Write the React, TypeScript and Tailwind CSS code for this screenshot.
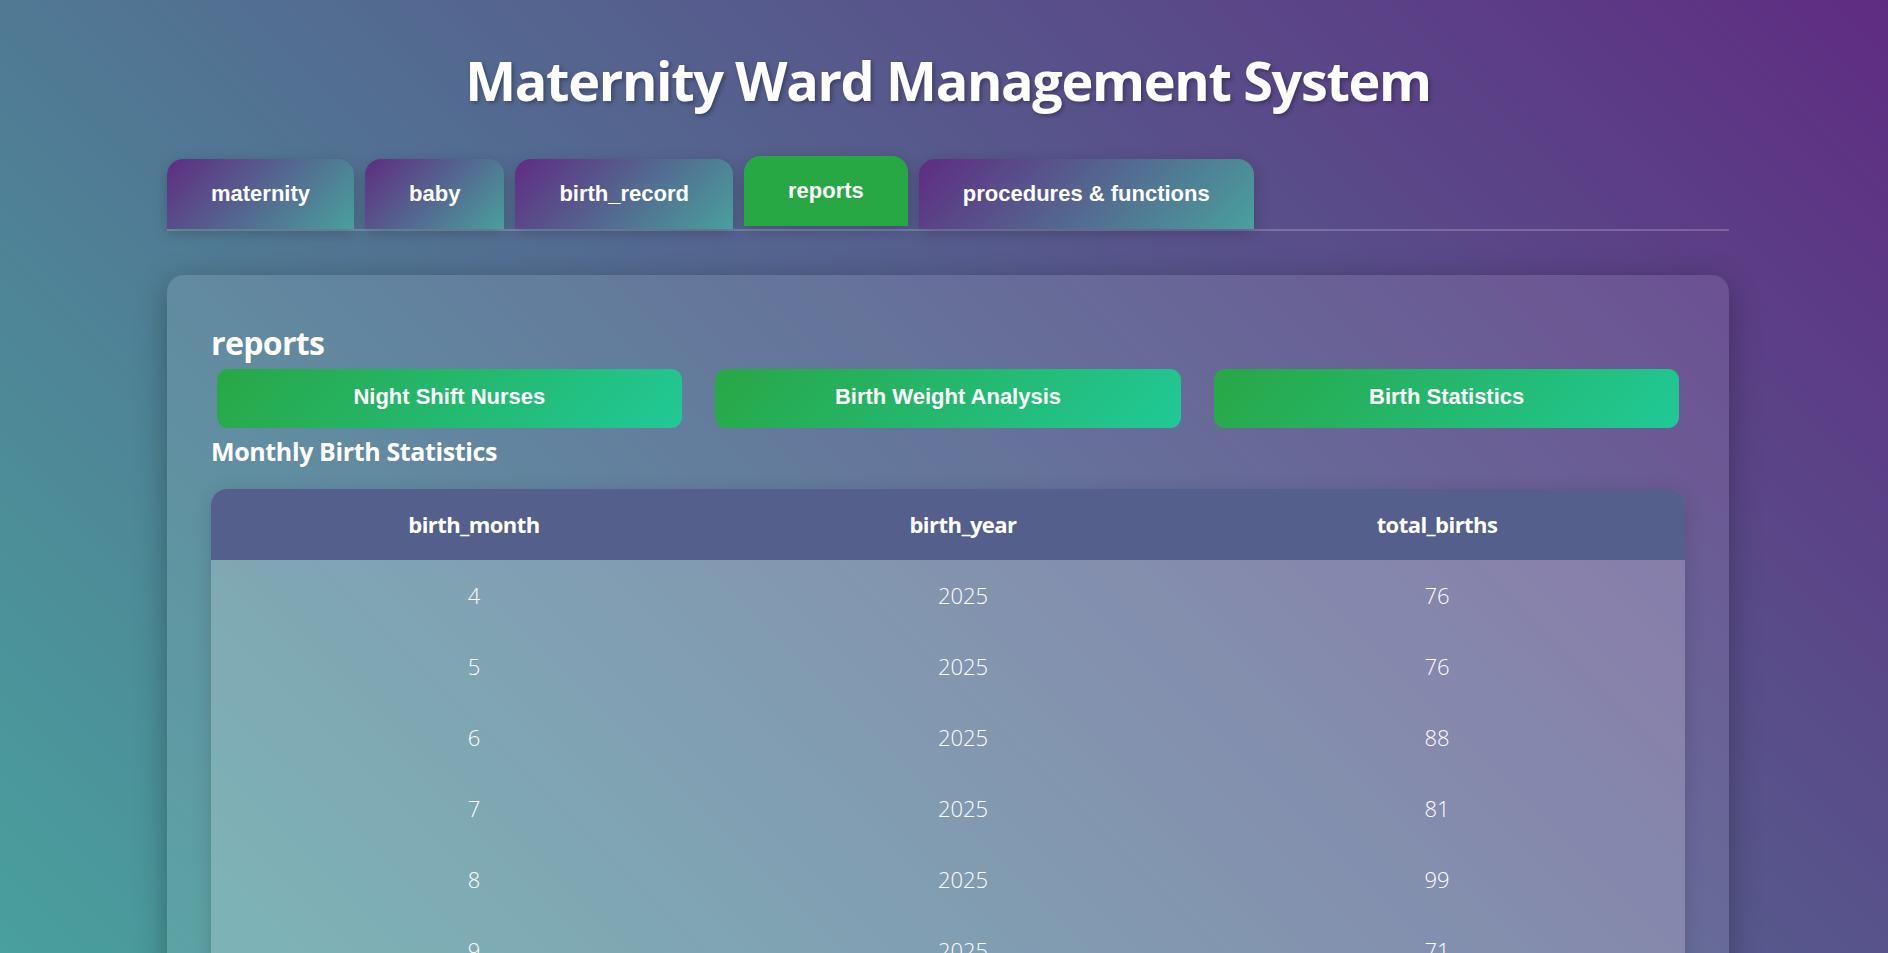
import React from "react";

const tabs = ["maternity", "baby", "birth_record", "reports", "procedures & functions"];
const reports = ["Night Shift Nurses", "Birth Weight Analysis", "Birth Statistics"];
const rows = [
  [4, 2025, 76],
  [5, 2025, 76],
  [6, 2025, 88],
  [7, 2025, 81],
  [8, 2025, 99],
  [9, 2025, 71],
];

const seg = { fontFamily: '"Open Sans", "Noto Sans", sans-serif' };
const arial = { fontFamily: '"Liberation Sans", Arial, sans-serif' };

export default function App() {
  return (
    <div className="min-h-screen bg-fixed bg-[linear-gradient(45deg,#49a09d,#5f2c82)] pl-[8px] text-white" style={seg}>
      <div className="mx-auto w-[1562px] pb-[40px]">
        <h1 className="pt-[46px] text-center text-[54px] font-bold leading-[68px] tracking-[-0.025em] [text-shadow:2px_2px_4px_rgba(0,0,0,0.3)]">
          Maternity Ward Management System
        </h1>

        <div className="mt-[45px] flex items-end gap-[11px] border-b-2 border-white/20">
          {tabs.map((t) => {
            const active = t === "reports";
            return (
              <div
                key={t}
                style={arial}
                className={
                  active
                    ? "flex h-[70px] -translate-y-[3px] items-center rounded-t-[16px] bg-[#28a745] px-[44px] pb-[2px] text-[22px] font-bold shadow-[0_4px_15px_rgba(0,0,0,0.2)]"
                    : "flex h-[70px] items-center rounded-t-[16px] bg-[linear-gradient(135deg,#5f2c82,#49a09d)] px-[44px] pb-[2px] text-[22px] font-bold shadow-[0_4px_15px_rgba(0,0,0,0.2)]"
                }
              >
                {t}
              </div>
            );
          })}
        </div>

        <div className="mt-[44px] rounded-[17px] bg-white/10 px-[44px] pt-[47px] pb-[44px] shadow-[0_8px_32px_rgba(0,0,0,0.3)]">
          <h2 className="mt-[2px] text-[32px] font-bold leading-[38px] tracking-[-0.02em]">reports</h2>
          <div className="mt-[1px] grid grid-cols-3 gap-[22px]">
            {reports.map((r) => (
              <button
                key={r}
                style={arial}
                className="m-[5.5px] h-[59px] rounded-[11px] bg-[linear-gradient(135deg,#28a745,#20c997)] pb-[4px] text-[22px] font-bold text-white"
              >
                {r}
              </button>
            ))}
          </div>
          <h3 className="mt-[3px] text-[25px] font-bold leading-[30px] tracking-[-0.015em]">Monthly Birth Statistics</h3>

          <div className="mt-[23px] overflow-hidden rounded-[16px] bg-white/20 shadow-[0_4px_20px_rgba(0,0,0,0.15)]">
            <table className="w-full table-fixed border-collapse">
              <colgroup>
                <col className="w-[526px]" />
                <col className="w-[452px]" />
                <col className="w-[496px]" />
              </colgroup>
              <thead>
                <tr className="bg-[#545f8c]">
                  {["birth_month", "birth_year", "total_births"].map((h) => (
                    <th key={h} className="h-[71px] text-center text-[22px] font-bold tracking-[-0.025em]">
                      {h}
                    </th>
                  ))}
                </tr>
              </thead>
              <tbody>
                {rows.map((r, i) => (
                  <tr key={i}>
                    {r.map((c, j) => (
                      <td key={j} className="h-[71px] text-center text-[22px] font-light">
                        {c}
                      </td>
                    ))}
                  </tr>
                ))}
              </tbody>
            </table>
          </div>
        </div>
      </div>
    </div>
  );
}
